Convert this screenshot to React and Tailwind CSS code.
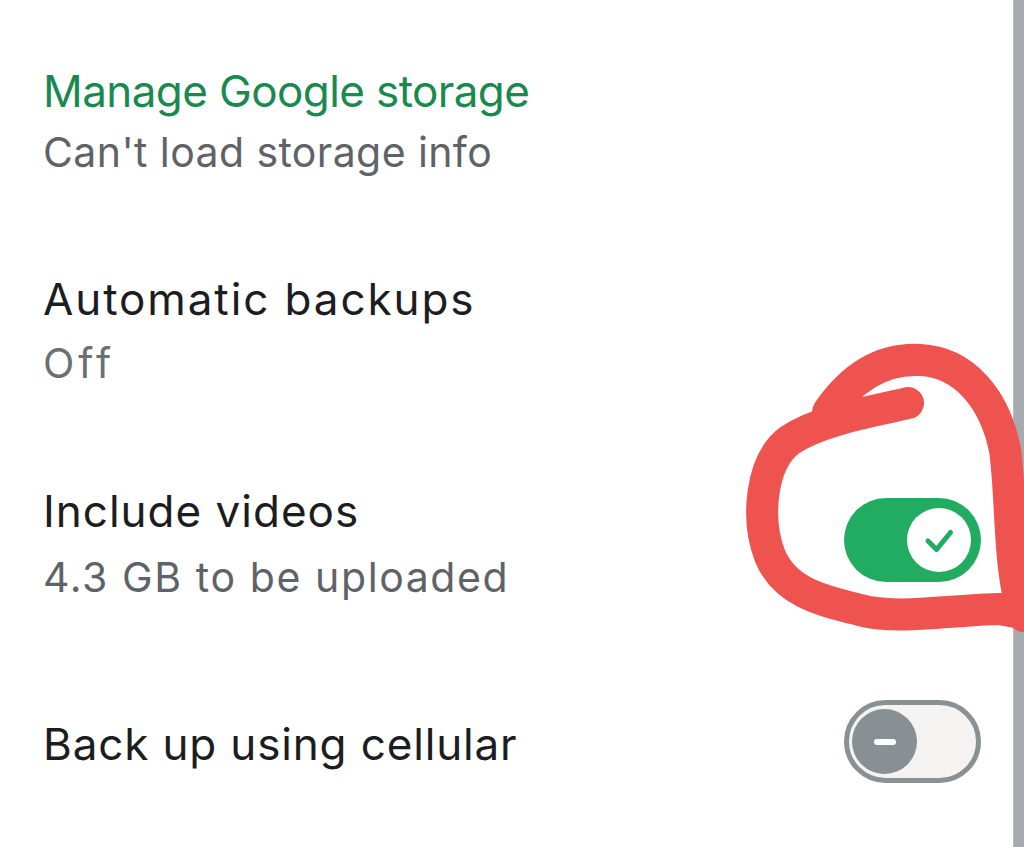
import React from "react";

const font = { fontFamily: "Inter, 'Noto Sans', sans-serif" };

function ToggleOn() {
  return (
    <div className="flex h-[84px] w-[137px] shrink-0 items-center justify-end rounded-full bg-[#21ac62] pr-[10px]">
      <div className="h-[64px] w-[64px] rounded-full bg-white">
        <svg width="64" height="64" viewBox="0 0 64 64" fill="none">
          <path d="M21 33 L29.5 41.5 L43.5 24.5" stroke="#21ac62" strokeWidth="5" strokeLinecap="round" strokeLinejoin="round" />
        </svg>
      </div>
    </div>
  );
}

function ToggleOff() {
  return (
    <div className="flex h-[83px] w-[137px] shrink-0 items-center rounded-full border-[5px] border-[#8a9195] bg-[#f4f3f2] pl-[3px]">
      <div className="flex h-[65px] w-[65px] items-center justify-center rounded-full bg-[#899094]">
        <div className="h-[6px] w-[22px] rounded-full bg-white" />
      </div>
    </div>
  );
}

export default function App() {
  return (
    <div className="relative flex h-[847px] w-full overflow-hidden bg-white" style={font}>
      <div className="flex flex-1 flex-col pl-[43px] pr-[32px]">
        <div className="mt-[65px] flex flex-col">
          <div className="text-[44px] leading-[52px] tracking-[-0.6px] text-[#188a4f]">Manage Google storage</div>
          <div className="mt-[9px] text-[41px] leading-[52px] tracking-[0.4px] text-[#5f6368]">Can't load storage info</div>
        </div>

        <div className="mt-[95px] flex flex-col">
          <div className="text-[44px] leading-[52px] tracking-[1.9px] text-[#1c1d1f]">Automatic backups</div>
          <div className="mt-[12px] text-[41px] leading-[52px] tracking-[4px] text-[#6b7075]">Off</div>
        </div>

        <div className="mt-[96px] flex items-start justify-between">
          <div className="flex flex-col">
            <div className="text-[44px] leading-[52px] tracking-[1px] text-[#1c1d1f]">Include videos</div>
            <div className="mt-[14px] text-[41px] leading-[52px] tracking-[1.6px] text-[#5f6368]">4.3 GB to be uploaded</div>
          </div>
          <div className="mt-[13px]">
            <ToggleOn />
          </div>
        </div>

        <div className="mt-[97px] flex items-start justify-between">
          <div className="mt-[18px] text-[44px] leading-[52px] tracking-[0.85px] text-[#1c1d1f]">Back up using cellular</div>
          <ToggleOff />
        </div>
      </div>

      <div className="w-[11px] shrink-0 border-l border-[#b8babd] bg-[#a8abae]" />

      <svg className="pointer-events-none absolute left-0 top-0" width="1024" height="847" viewBox="0 0 1024 847" fill="none">
        <path
          d="M 908 403 C 870 412, 820 420, 790 440 C 760 462, 756 520, 770 556 C 785 592, 820 600, 860 610 C 895 620, 950 610, 1000 609 L 1026 614 M 1024 616 C 1008 570, 1012 500, 1005 450 C 995 400, 965 362, 920 360 C 880 358, 850 380, 828 412"
          stroke="#ef5350"
          strokeWidth="32"
          strokeLinecap="round"
          strokeLinejoin="round"
        />
      </svg>
    </div>
  );
}
